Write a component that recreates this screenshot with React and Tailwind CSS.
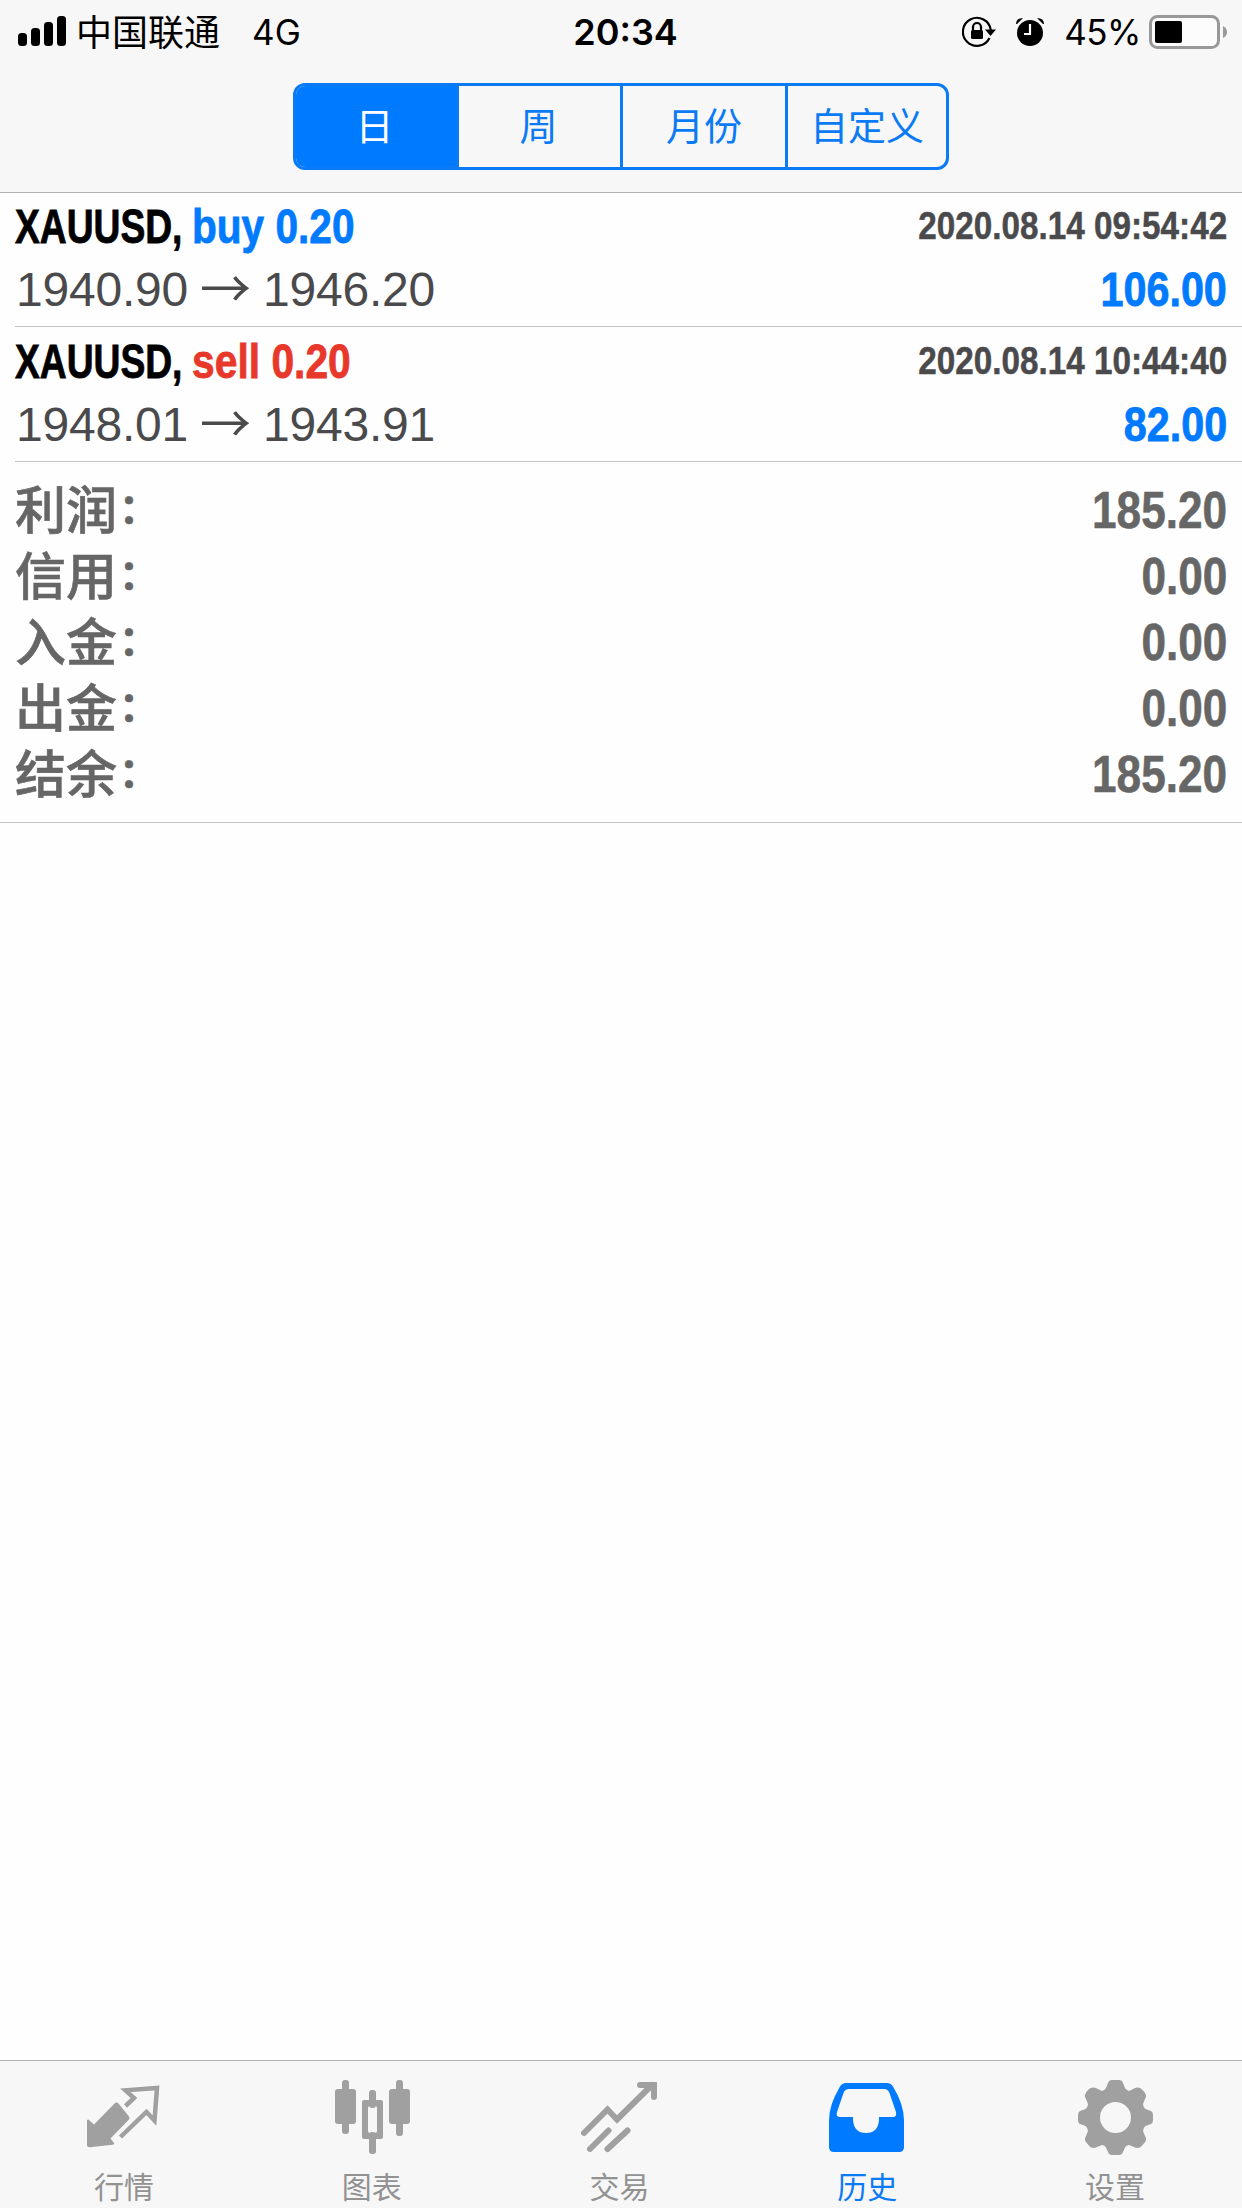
import React from "react";

const deals = [
  {
    id: 1,
    symbol: "XAUUSD,",
    side: "buy 0.20",
    sideClass: "text-[#007aff] scale-x-[0.846]",
    open: "1940.90",
    close: "1946.20",
    time: "2020.08.14 09:54:42",
    profit: "106.00",
  },
  {
    id: 2,
    symbol: "XAUUSD,",
    side: "sell 0.20",
    sideClass: "text-[#e8382b] scale-x-[0.85]",
    open: "1948.01",
    close: "1943.91",
    time: "2020.08.14 10:44:40",
    profit: "82.00",
  },
];

const totals = [
  { label: "利润", value: "185.20" },
  { label: "信用", value: "0.00" },
  { label: "入金", value: "0.00" },
  { label: "出金", value: "0.00" },
  { label: "结余", value: "185.20" },
];

const periods = [
  { label: "日", className: "w-[160px] pt-[2px] pr-[3px] bg-[#007aff] text-white" },
  { label: "周", className: "w-[164px] pt-[2px] pr-[2px] border-l-3 border-[#0b7af5]" },
  { label: "月份", className: "w-[165px] pt-[2px] border-l-3 border-[#0b7af5]" },
  { label: "自定义", className: "w-[161px] pt-[2px] border-l-3 border-[#0b7af5]" },
];

const QuotesIcon = () => (
  <svg width="76" height="76" viewBox="-1 -4 76 76" fill="none">
    <path
      d="M2.500 36.500 Q1 34.500 0 36.500 V61.500 Q0 63.500 3 63.300 L25.500 60.800 Q28 60.300 27 59 L23.500 54.500 L41.500 36 Q43.500 34.300 42 32.500 L31.500 19.500 Q29.700 17.500 27.800 19.300 L7 40.500 Z"
      fill="currentColor"
    />
    <path
      d="M38.500 22 L47 14 L38.500 6.300 L70 4 L67.500 36.500 L59.500 28 L33.500 53"
      stroke="currentColor"
      strokeWidth="4.500"
    />
  </svg>
);

const ChartIcon = () => (
  <svg width="76" height="76" viewBox="-1 0 76 76" fill="currentColor">
    <rect x="7" y="0" width="7" height="54" rx="3" />
    <rect x="0" y="9" width="21" height="35" rx="3" />
    <rect x="61" y="0" width="7" height="56" rx="3" />
    <rect x="54" y="9" width="21" height="35" rx="3" />
    <rect x="34" y="10" width="7" height="18" rx="3" />
    <rect x="34" y="52" width="7" height="22" rx="3" />
    <path
      fillRule="evenodd"
      d="M29 20 h17 q2 0 2 2 v35 q0 2 -2 2 h-17 q-2 0 -2 -2 v-35 q0 -2 2 -2 z M35 26 q-2 0 -2 2 v23 q0 2 2 2 h5 q2 0 2 -2 v-23 q0 -2 -2 -2 z"
    />
  </svg>
);

const TradeIcon = () => (
  <svg
    width="76"
    height="76"
    viewBox="0 0 76 76"
    fill="none"
    stroke="currentColor"
    strokeWidth="6"
    strokeLinecap="round"
  >
    <path d="M3 53 L26.500 29.500 L36 39.500 L71 5" strokeLinejoin="miter" />
    <path d="M59 5 H73 V17" strokeLinecap="round" />
    <path d="M9 69 L27.500 50.500" />
    <path d="M26.500 69 L46.500 50.500" />
  </svg>
);

const HistoryIcon = () => (
  <svg width="76" height="76" viewBox="0 0 76 76" fill="currentColor">
    <path
      fillRule="evenodd"
      d="M17 3 H58 Q62 3 64 6.500 Q75 25 75 40 V67 Q75 72 70 72 H5 Q0 72 0 67 V40 Q0 25 11 6.500 Q13 3 17 3 Z M20 9 Q16 9 14.500 13 L8 32 Q6.500 37 11 37 H24 V40 Q25 53 37 53 Q49 53 50 40 V37 H64 Q68 37 67 32 L60.500 13 Q59 9 55 9 Z"
    />
  </svg>
);

const SettingsIcon = () => (
  <svg width="76" height="76" viewBox="-1 0 76 76" fill="currentColor">
    <path
      fillRule="evenodd"
      d="M34 0 H41 Q44 0 45 3 L47 8 Q48 10 51 11 L56 8.500 Q61 6 64.500 10 Q70 15 67 19 L65 24 Q65 27 67.500 29 L73 31 Q75 32 75 35 V40 Q75 43 73 44 L67.500 46 Q65 48 65 51 L67 56 Q70 60 65 64.500 Q61 70 56 67 L51 65 Q48 65 47 67.500 L45 72 Q44 75 41 75 H34 Q31 75 30 72 L28 67.500 Q27 65 24 65 L19 67 Q14 70 10 64.500 Q5 60 8 56 L10 51 Q10 48 7.500 46 L2 44 Q0 43 0 40 V35 Q0 32 2 31 L7.500 29 Q10 27 10 24 L8 19 Q5 15 10 10 Q14 6 19 8.500 L24 11 Q27 10 28 8 L30 3 Q31 0 34 0 Z M37.500 22 A15.500 15.500 0 1 0 37.500 53 A15.500 15.500 0 1 0 37.500 22 Z"
    />
  </svg>
);

const tabs = [
  { label: "行情", icon: QuotesIcon },
  { label: "图表", icon: ChartIcon },
  { label: "交易", icon: TradeIcon },
  { label: "历史", icon: HistoryIcon, active: true },
  { label: "设置", icon: SettingsIcon },
];

const StatusBar = () => (
  <div className="grid grid-cols-3 h-[60px] items-center text-black text-[36px] leading-[60px] font-['Inter','Noto_Sans_CJK_SC',sans-serif]">
    <div className="flex items-center pl-[18px]">
      <svg width="48" height="32" viewBox="0 0 48 32">
        <rect x="0" y="17" width="9" height="13" rx="3.500" />
        <rect x="13" y="12" width="9" height="18" rx="3.500" />
        <rect x="26" y="6" width="9" height="24" rx="3.500" />
        <rect x="39" y="0" width="9" height="30" rx="3.500" />
      </svg>
      <span className="ml-[10px] pt-[4px] font-['Liberation_Sans','Noto_Sans_CJK_SC',sans-serif]">中国联通</span>
      <span className="ml-[32px] text-[35px]">4G</span>
    </div>
    <div className="text-center font-semibold pl-[9px]">20:34</div>
    <div className="flex items-center justify-end pr-[15px]">
      <svg width="34" height="32" viewBox="0 0 34 32" className="shrink-0">
        <path
          d="M27.500 22 A14 14 0 1 1 28.800 14"
          fill="none"
          stroke="black"
          strokeWidth="2.200"
        />
        <path d="M23 13.500 H34 L28.500 20 Z" />
        <rect x="9" y="14" width="12" height="9" rx="1.500" />
        <path d="M11 15 V11 A4 4 0 0 1 19 11 V15" fill="none" stroke="black" strokeWidth="2.200" />
      </svg>
      <svg width="28" height="30" viewBox="0 0 28 30" className="ml-[20px] shrink-0">
        <circle cx="14" cy="16" r="13" />
        <path d="M0 7 Q0 1 7 1 L1 7 Z M28 7 Q28 1 21 1 L27 7 Z" />
        <path d="M14 7 V17 H8" fill="none" stroke="white" strokeWidth="2.200" />
      </svg>
      <span className="ml-[20px] text-[35px] tracking-[-0.5px]">45%</span>
      <svg width="78" height="34" viewBox="0 0 78 34" className="ml-[8px] shrink-0">
        <rect x="1.500" y="1.500" width="68" height="31" rx="7" fill="#fcfcfc" stroke="#999999" strokeWidth="3" />
        <rect x="6" y="6" width="27" height="22" rx="2" />
        <path d="M74 11 Q78 13 78 17 Q78 21 74 23 Z" fill="#999999" />
      </svg>
    </div>
  </div>
);

const PeriodSwitch = () => (
  <div className="mx-auto mt-[23px] flex w-[656px] h-[87px] rounded-[12px] border-3 border-[#0b7af5] overflow-hidden text-[38px] text-[#0b7af5]">
    {periods.map(({ label, className }) => (
      <button key={label} className={className}>
        {label}
      </button>
    ))}
  </div>
);

const DealRow = ({ deal }) => (
  <li className="ml-[15px] pr-[15px] h-[135px] border-b border-[#c3c3c5] whitespace-nowrap">
    <div className="flex justify-between h-[68px] leading-[68px] text-[48px] font-bold">
      <div className="flex leading-[70px] [-webkit-text-stroke:0.8px]">
        <span className="w-[177px]">
          <span className="inline-block origin-left scale-x-[0.775] text-black">{deal.symbol}</span>
        </span>
        <span className={`inline-block origin-left ${deal.sideClass}`}>{deal.side}</span>
      </div>
      <span className="inline-block origin-right scale-x-[0.853] text-[39px] text-[#4a4a4c] [-webkit-text-stroke:0.5px]">
        {deal.time}
      </span>
    </div>
    <div className="flex justify-between h-[60px] leading-[60px] text-[48px]">
      <div className="flex pl-[1px] tracking-[-0.2px] text-[#4a4a4c]">
        <span>{deal.open}</span>
        <span className="relative -top-[4px] mx-[12px] text-[51px] font-['Noto_Sans_CJK_SC',sans-serif]">→</span>
        <span>{deal.close}</span>
      </div>
      <span className="inline-block origin-right scale-x-[0.86] font-bold text-[#007aff] [-webkit-text-stroke:0.8px]">
        {deal.profit}
      </span>
    </div>
  </li>
);

const Totals = () => (
  <div className="h-[361px] pt-[16px] border-b border-[#c3c3c5] text-[#666666]">
    {totals.map(({ label, value }) => (
      <div key={label} className="flex justify-between h-[66px] leading-[66px] px-[15px]">
        <div className="flex leading-[68px] text-[51px] font-medium [-webkit-text-stroke:0.6px]">
          <span>{label}</span>
          <span className="relative -top-[3px] ml-[2px] text-[40px] font-bold">：</span>
        </div>
        <span className="inline-block origin-right scale-x-[0.865] text-[51px] font-bold [-webkit-text-stroke:0.6px]">
          {value}
        </span>
      </div>
    ))}
  </div>
);

const TabBar = () => (
  <nav className="h-[148px] pr-[3px] flex border-t border-[#b2b2b2] bg-[#f7f7f7]">
    {tabs.map(({ label, icon: Icon, active }) => (
      <a
        key={label}
        className={`flex-1 flex flex-col items-center pt-[19px] ${active ? "text-[#007aff]" : "text-[#a0a0a0]"}`}
      >
        <Icon />
        <span
          className={`mt-[16px] text-[30px] leading-[32px] ${active ? "text-[#0b7af5]" : "text-[#929292]"}`}
        >
          {label}
        </span>
      </a>
    ))}
  </nav>
);

const App = () => {
  return (
    <div className="w-[1242px] h-[2208px] flex flex-col overflow-hidden bg-[#fefefe] font-['Liberation_Sans','Noto_Sans_CJK_SC',sans-serif]">
      <header className="h-[193px] shrink-0 bg-[#f7f7f7] border-b border-[#b2b2b2]">
        <StatusBar />
        <PeriodSwitch />
      </header>
      <main className="flex-1">
        <ul className="-mt-px">
          {deals.map((deal) => (
            <DealRow key={deal.id} deal={deal} />
          ))}
        </ul>
        <Totals />
      </main>
      <TabBar />
    </div>
  );
};

export default App;
